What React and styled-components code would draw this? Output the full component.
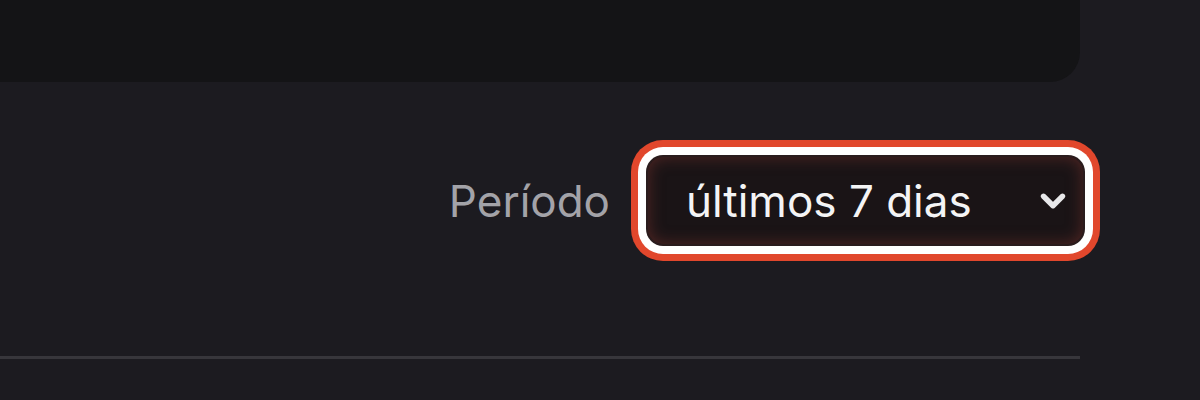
import React from 'react'
import styled, { createGlobalStyle } from 'styled-components'
import { ChevronDown } from 'lucide-react'

const GlobalStyle = createGlobalStyle`
   html, body {
      margin: 0;
      padding: 0;
      background: #1c1b20;
      font-family: Inter, "Noto Sans", sans-serif;
   }
`
const Page = styled.div`
   width: 1200px;
   height: 400px;
   overflow: hidden;
   padding-right: 120px;
   box-sizing: border-box;
`
const Card = styled.div`
   height: 82px;
   background: #141416;
   border-radius: 0 0 30px 0;
`
const Toolbar = styled.div`
   display: flex;
   justify-content: flex-end;
   align-items: center;
   gap: 38px;
   margin-top: 75px;
   margin-right: -3px;
`
const Label = styled.label`
   font-size: 44px;
   color: #a3a3a8;
`
const SelectButton = styled.button`
   display: flex;
   align-items: center;
   justify-content: space-between;
   width: 435px;
   height: 87px;
   box-sizing: border-box;
   padding: 0 11px 0 38px;
   border: none;
   border-radius: 15px;
   background: #1a1416;
   color: #f4f4f5;
   font-family: inherit;
   font-size: 44px;
   box-shadow:
      inset 0 0 16px rgba(120, 50, 45, 0.6),
      0 0 0 2px #2a1c1d,
      0 0 0 10px #ffffff,
      0 0 0 17px #e1472c;
   cursor: pointer;
   outline: none;
`
const Divider = styled.hr`
   margin: 112px 0 0;
   border: none;
   height: 3px;
   background: #37363b;
`

const App = () => {
   return (
      <>
         <GlobalStyle />
         <Page>
            <Card />
            <Toolbar>
               <Label>Período</Label>
               <SelectButton>
                  <span>últimos 7 dias</span>
                  <ChevronDown size={38} strokeWidth={3.4} color="#e8e8ea" />
               </SelectButton>
            </Toolbar>
            <Divider />
         </Page>
      </>
   )
}

export default App
